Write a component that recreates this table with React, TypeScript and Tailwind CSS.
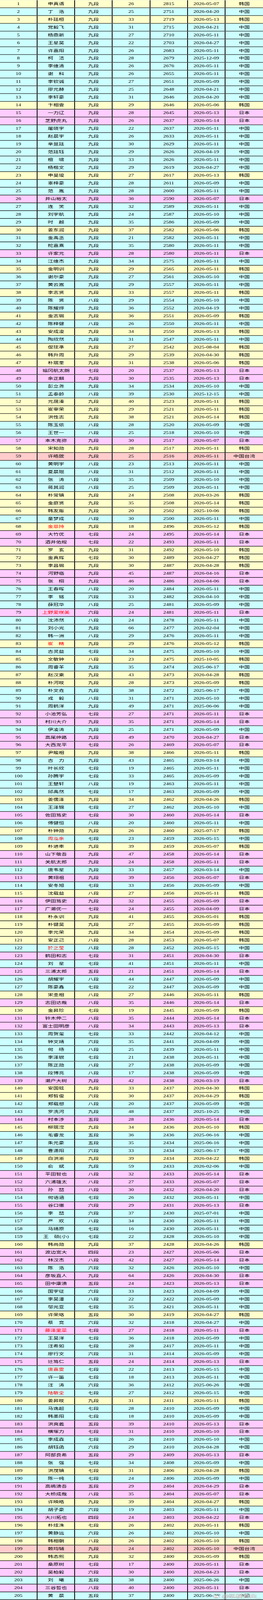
const RAW = `申真谞|九|26|2815|2026-05-07|K
丁　浩|九|25|2751|2026-04-20|C
朴廷桓|九|33|2719|2026-05-13|K
党毅飞|九|31|2715|2026-04-21|C
杨鼎新|九|27|2710|2026-05-11|C
王星昊|九|22|2703|2026-04-27|C
许嘉阳|九|26|2683|2026-05-11|C
柯　洁|九|28|2679|2025-12-09|C
李维清|九|26|2676|2026-05-11|C
谢　科|九|26|2655|2026-05-11|C
李钦诚|九|27|2651|2026-05-09|C
廖元赫|九|25|2648|2026-04-21|C
李轩豪|九|31|2646|2026-04-20|C
卞相壹|九|29|2646|2026-05-06|K
一力辽|九|28|2645|2026-05-13|J
芝野虎丸|九|26|2637|2026-05-14|J
屠晓宇|九|22|2637|2026-05-11|C
赵晨宇|九|26|2633|2026-05-11|C
芈昱廷|九|30|2629|2026-05-11|C
范廷钰|九|29|2626|2026-04-19|C
檀　啸|九|33|2626|2026-05-11|C
杨楷文|九|29|2619|2026-04-27|C
申旻埈|九|27|2617|2026-05-13|K
辜梓豪|九|28|2611|2026-05-09|C
范　胤|九|28|2600|2026-05-11|C
井山裕太|九|36|2590|2026-05-07|J
连　笑|九|32|2589|2026-05-11|C
刘宇航|九|24|2587|2026-05-10|C
时　越|九|35|2586|2026-05-09|C
姜东润|九|37|2582|2026-05-06|K
金禹丞|九|21|2582|2026-05-11|C
柁嘉熹|九|35|2580|2026-05-11|C
许家元|九|28|2580|2026-05-11|J
江维杰|九|34|2575|2026-05-11|C
金明训|九|29|2565|2026-05-11|K
谢尔豪|九|27|2561|2026-05-10|C
黄云嵩|九|29|2557|2026-05-11|C
李志贤|九|33|2557|2026-05-11|K
陈　贤|八|29|2554|2026-05-10|C
陈耀烨|九|36|2552|2026-04-19|C
金志锡|九|36|2551|2026-05-09|K
陈梓健|八|26|2550|2026-05-11|C
安成浚|九|34|2550|2026-05-13|K
陶欣然|九|31|2547|2026-05-11|C
偰玹準|九|27|2542|2025-08-04|K
韩升周|九|29|2539|2026-04-30|K
朴珉奎|九|31|2538|2026-05-06|K
福冈航太朗|七|20|2537|2026-05-13|J
余正麒|九|30|2535|2026-05-13|J
彭立尧|九|34|2534|2026-05-10|C
孟泰龄|八|39|2530|2025-12-15|C
元晟溱|九|40|2523|2026-05-11|K
崔宰荣|九|29|2521|2026-05-11|K
洪性志|九|38|2521|2026-05-14|K
陈玉侬|八|28|2520|2026-05-09|C
王世一|八|25|2518|2026-05-10|C
本木克弥|九|30|2517|2026-05-07|J
宋知勋|九|28|2517|2026-05-11|K
许皓鋐|九|25|2516|2026-05-11|T
黄明宇|八|23|2513|2026-05-11|C
夏晨琨|八|31|2512|2026-05-11|C
张　涛|八|35|2509|2026-05-10|C
蒋其润|八|25|2509|2026-05-11|C
朴常镇|九|24|2508|2026-03-26|K
金庭贤|九|35|2508|2026-05-14|K
韩友赈|九|20|2502|2025-10-06|K
童梦成|八|30|2500|2026-05-11|C
金恩持|九|18|2496|2026-05-12|K|r
大竹优|七|24|2495|2026-05-14|J
酒井佑规|七|22|2493|2026-05-11|J
罗　玄|九|31|2492|2026-05-10|K
金真辉|七|30|2489|2026-04-27|K
李昌锡|九|30|2487|2026-04-28|K
河野临|九|45|2487|2026-04-16|J
张　栩|九|46|2486|2026-04-06|J
王春晖|八|20|2484|2026-05-11|C
李　铭|六|33|2482|2026-04-10|C
薛冠华|八|25|2481|2026-05-09|C
上野爱咲美|六|24|2481|2026-05-11|J|r
沈沛然|八|24|2478|2026-05-11|C
刘小光|九|66|2477|2026-02-04|C
韩一洲|八|29|2476|2026-05-11|C
崔　精|九|29|2476|2026-05-12|K|r
古灵益|七|34|2475|2026-05-10|C
文敏钟|八|23|2475|2025-10-05|K
周睿羊|九|35|2474|2025-06-17|C
赵汉乘|九|43|2473|2026-04-28|K
朴河旼|九|28|2473|2026-05-09|K
朴文垚|九|38|2472|2025-06-17|C
戎　毅|八|31|2471|2026-05-10|C
周鹤洋|九|49|2471|2025-06-06|C
小池芳弘|七|27|2471|2026-05-11|J
村川大介|九|35|2471|2026-05-14|J
伊凌涛|九|25|2471|2026-05-09|C
高尾绅路|九|49|2470|2026-04-27|J
大西龙平|七|26|2469|2026-05-07|J
尹畯相|九|38|2466|2026-05-11|K
古　力|九|43|2465|2026-03-14|C
叶长欣|七|19|2465|2026-05-11|C
孙腾宇|七|33|2465|2026-05-09|C
王楚轩|八|19|2463|2026-05-11|C
邱禹然|七|17|2463|2026-05-09|C
姜儒泽|九|34|2462|2026-04-26|K
王泽锦|七|27|2462|2026-05-10|C
佐田笃史|七|30|2460|2026-05-14|J
傅健恒|八|20|2460|2026-05-11|C
朴钟勋|九|26|2460|2025-07-17|K
周泓余|七|23|2459|2026-05-15|C|r
朴进率|九|39|2459|2026-05-07|K
山下敬吾|九|47|2458|2026-05-14|J
关航太郎|九|24|2458|2026-05-11|J
唐韦星|九|33|2457|2026-03-14|C
黄翊祖|九|39|2456|2026-05-07|J
安冬旭|七|33|2456|2026-05-09|C
沈载益|八|27|2456|2026-05-11|K
伊田笃史|九|32|2455|2026-05-09|J
广濑优一|七|24|2455|2026-04-09|J
朴永训|九|41|2455|2026-05-01|K
朴键昊|九|27|2455|2026-05-09|K
李元荣|九|34|2454|2026-05-09|K
安正己|八|28|2453|2026-05-07|K
於之莹|八|28|2452|2026-05-15|C|r
鹤田和志|七|31|2451|2026-04-30|J
刘　星|七|41|2451|2026-05-11|C
三浦太郎|五|21|2451|2026-05-14|J
胡耀宇|八|44|2447|2026-05-09|C
陈豪鑫|七|22|2447|2026-05-09|C
宋圭相|八|27|2446|2026-05-11|K
志田达哉|八|35|2446|2026-05-14|J
金昇珍|七|19|2445|2026-05-09|K
铃木伸二|八|35|2444|2026-05-14|J
富士田明彦|八|34|2443|2026-05-13|J
周贺玺|七|33|2442|2026-04-12|C
钟文靖|六|35|2441|2026-04-09|C
何　旸|八|25|2439|2026-05-11|C
李泽锐|七|21|2438|2026-05-11|C
陈正勋|八|27|2438|2026-05-09|C
段博亮|八|17|2438|2026-05-09|C
濑户大树|九|42|2438|2026-03-19|J
安国铉|九|33|2437|2026-04-30|K
郑晳俊|六|30|2437|2026-04-29|K
郑载想|八|20|2437|2026-05-09|C
罗洗河|九|48|2437|2025-10-25|C
村本涉|五|28|2436|2026-05-14|J
柳珉滢|九|34|2436|2026-05-10|K
毛睿龙|五|36|2436|2025-06-16|C
朱元豪|五|35|2434|2025-06-16|C
曹潇阳|六|33|2434|2025-06-17|C
白洪淅|九|39|2434|2026-04-22|K
俞　斌|九|59|2433|2026-02-06|C
平田智也|八|32|2433|2026-05-14|J
六浦雄太|八|27|2433|2026-05-07|J
孙　喆|八|30|2432|2026-04-20|J
何语涵|七|26|2432|2026-05-11|C
谷口徹|六|29|2431|2026-05-13|J
李　喆|六|37|2430|2025-07-01|C
严　欢|八|34|2430|2026-05-11|C
马靖原|七|16|2430|2026-05-11|C
王　硕(小)|七|22|2428|2026-05-10|C
韩尚勋|九|37|2428|2026-04-26|K
渡边宽大|四|23|2427|2026-05-06|J
林汉杰|八|42|2427|2026-05-14|J
陈　浩|六|32|2426|2026-05-10|C
彦坂直人|九|64|2426|2026-04-30|J
田中康湧|五|24|2423|2026-05-13|J
国宇征|六|33|2423|2026-04-09|C
李昊潼|八|22|2422|2026-05-09|C
邬光亚|七|35|2421|2026-05-11|C
许荣珞|五|30|2419|2026-04-27|K
蔡　竞|六|32|2418|2026-04-27|C
藤泽里菜|七|27|2418|2026-05-11|J|r
王昊洋|七|36|2418|2026-05-09|C
汪希如|七|28|2417|2026-05-11|C
廖行文|六|31|2414|2026-05-09|C
辻笃仁|五|24|2414|2026-05-13|J
唐嘉雯|七|22|2413|2026-05-15|C|r
许一笛|七|18|2413|2026-05-11|C
汪　涛|六|36|2412|2025-06-26|C
陆敏全|七|27|2412|2026-05-15|C|r
姜昇旼|九|31|2411|2026-05-11|K
马逸超|七|28|2410|2026-05-09|C
韩墨阳|七|18|2410|2026-05-09|C
洪爽義|五|39|2410|2026-05-13|J
横塚力|七|31|2410|2026-05-10|J
李成森|七|26|2410|2026-05-10|C
胡钰函|六|29|2410|2026-04-28|C
阿部良希|五|29|2409|2026-05-13|J
张　强|七|34|2408|2026-05-09|C
洪茂镇|七|31|2406|2026-04-28|K
陈一纯|七|24|2406|2026-05-09|C
高嶋湧吾|五|29|2404|2026-04-29|J
大桥成哉|八|35|2404|2026-05-07|J
许映皓|九|39|2404|2026-04-27|K
胡子豪|六|19|2403|2026-05-11|C
大川拓也|四|24|2403|2026-04-22|J
朴炫洙|七|26|2402|2026-05-11|K
黄静远|六|26|2402|2026-05-10|C
韩相朝|八|26|2402|2026-05-10|K
赖均辅|九|24|2402|2026-05-10|T
韩态熙|九|32|2400|2026-05-09|K
桑原树|七|17|2400|2026-05-11|J
吴柏毅|六|30|2400|2026-04-23|J
刘　曦|五|38|2400|2025-06-26|C
三谷哲也|八|40|2400|2026-05-11|J
黄　晨|五|37|2400|2025-06-26|C`;

type Player = {
  rank: number;
  name: string;
  dan: string;
  age: string;
  rating: string;
  date: string;
  country: string;
  red: boolean;
};

// 国家 -> 名称与底色
const COUNTRY: Record<string, { label: string; bg: string }> = {
  K: { label: "韩国", bg: "bg-[#ffffcc]" },
  C: { label: "中国", bg: "bg-[#ccffff]" },
  J: { label: "日本", bg: "bg-[#ffccff]" },
  T: { label: "中国台湾", bg: "bg-[#ffcccc]" },
};

const players: Player[] = RAW.split("\n").map((line, i) => {
  const [name, dan, age, rating, date, country, flag] = line.split("|");
  return {
    rank: i + 1,
    name,
    dan: dan + "段",
    age,
    rating,
    date,
    country,
    red: flag === "r",
  };
});

const PAGE_H = 6151;

function Cell({ children, last = false, red = false }: { children: React.ReactNode; last?: boolean; red?: boolean }) {
  return (
    <div
      className={`flex items-center justify-center whitespace-nowrap ${
        last ? "" : "border-r-2 border-black"
      } ${red ? "text-[#ff0000]" : "text-black"}`}
    >
      {children}
    </div>
  );
}

function Row({ p }: { p: Player }) {
  const c = COUNTRY[p.country];
  return (
    <div className={`grid grid-cols-7 h-[30px] border-b-2 border-black ${c.bg}`}>
      <Cell>{p.rank}</Cell>
      <Cell red={p.red}>{p.name}</Cell>
      <Cell>{p.dan}</Cell>
      <Cell>{p.age}</Cell>
      <Cell>{p.rating}</Cell>
      <Cell>{p.date}</Cell>
      <Cell last>{c.label}</Cell>
    </div>
  );
}

function WeiboMark() {
  return (
    <div className="absolute right-[6px] bottom-[6px] flex items-center gap-[2px] pointer-events-none">
      <svg width="22" height="18" viewBox="0 0 22 18" fill="none">
        <path
          d="M9 5.5C5 6.5 1.5 9.5 1.8 12.5c.3 3 4.3 4.8 8.5 4.3 4.6-.5 7.6-3 7.2-5.6-.3-1.6-1.8-2-2.8-2.2.6-1.2.6-2.2-.4-2.6-1-.4-2.6.1-3.6.6.3-1.3-.2-2.1-1.7-1.5z"
          fill="#ffffff"
          stroke="#8a8a8a"
          strokeWidth="1"
        />
        <ellipse cx="9" cy="12.5" rx="3.6" ry="2.6" fill="#ffffff" stroke="#8a8a8a" strokeWidth="0.9" />
        <path d="M15.5 2.2c2.2-.2 4 1.6 3.8 3.8M15.6 4.2c1 0 1.8.8 1.7 1.8" stroke="#8a8a8a" strokeWidth="1.1" strokeLinecap="round" />
      </svg>
      <span className="text-[18px] leading-none text-white font-['Noto_Sans_CJK_SC',sans-serif] [text-shadow:0_0_1px_#6b6b6b,0_0_1px_#6b6b6b,0_0_2px_#9a9a9a]">
        @纵横自由_
      </span>
    </div>
  );
}

export default function App() {
  // 窗口高度不足整页时，纵向压缩以便整张表都落在可见区域内
  const vh = typeof window !== "undefined" ? window.innerHeight : PAGE_H;
  const s = vh > 0 && vh < PAGE_H ? vh / PAGE_H : 1;

  return (
    <div className="overflow-hidden" style={{ height: PAGE_H * s }}>
      <div
        className="relative w-[673px] bg-white border-t border-[#dcdcdc] font-['Liberation_Serif','Noto_Sans_CJK_SC',serif] text-[14px] leading-none origin-top"
        style={{ transform: s === 1 ? undefined : `scaleY(${s})` }}
      >
        {players.map((p) => (
          <Row key={p.rank} p={p} />
        ))}
        <WeiboMark />
      </div>
    </div>
  );
}
